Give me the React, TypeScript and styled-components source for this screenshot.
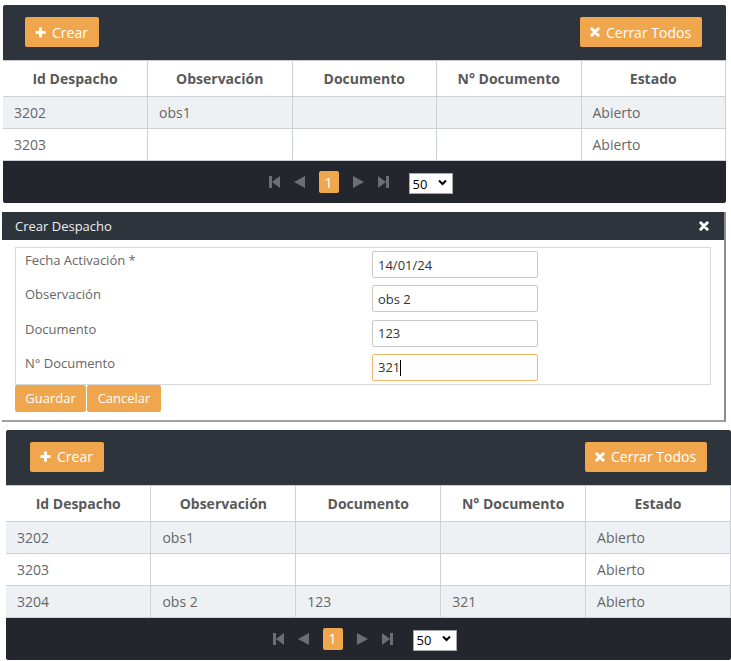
import React from "react";
import styled, { createGlobalStyle } from "styled-components";

const Global = createGlobalStyle`
  html, body { margin: 0; padding: 0; background: #ffffff; }
  body { font-family: "Open Sans", "Noto Sans", sans-serif; }
  * { box-sizing: border-box; }
`;

const ORANGE = "#f0a64c";

const Page = styled.div`
  display: flex;
  flex-direction: column;
  width: 731px;
  height: 661px;
  overflow: hidden;
`;

const Panel = styled.section<{ $left: number; $top: number; $width: number }>`
  margin-left: ${(p) => p.$left}px;
  margin-top: ${(p) => p.$top}px;
  width: ${(p) => p.$width}px;
  flex-shrink: 0;
  display: flex;
  flex-direction: column;
  border-radius: 3px;
  overflow: hidden;
  background: #23272d;
`;

const Toolbar = styled.div<{ $padLeft: number }>`
  height: 55px;
  background: #2e343b;
  display: flex;
  align-items: center;
  justify-content: space-between;
  padding: 0 24px 0 ${(p) => p.$padLeft}px;
`;

const ToolButton = styled.button<{ $width: number }>`
  width: ${(p) => p.$width}px;
  height: 30px;
  margin-top: -1px;
  border: none;
  border-radius: 2px;
  background: ${ORANGE};
  color: #ffffff;
  font-family: "Open Sans", sans-serif;
  font-size: 14px;
  display: flex;
  align-items: center;
  gap: 6px;
  padding: 0 0 0 10px;
  cursor: pointer;
`;

const Table = styled.table`
  width: 100%;
  table-layout: fixed;
  border-collapse: collapse;
  background: #ffffff;
`;

const HeadCell = styled.th`
  height: 36px;
  padding: 0 8px;
  text-align: center;
  font-size: 14px;
  font-weight: 700;
  color: #595959;
  border: 1px solid #cdd1d5;
  border-top-color: #c8ccd0;
  &:first-child { border-left: none; }
`;

const Row = styled.tr<{ $striped: boolean }>`
  background: ${(p) => (p.$striped ? "#eef1f4" : "#ffffff")};
`;

const Cell = styled.td`
  height: 32px;
  padding: 0 11px;
  font-size: 14px;
  color: #666666;
  border: 1px solid #cdd1d5;
  white-space: nowrap;
  &:first-child { border-left: none; }
`;

const Footer = styled.div`
  height: 42px;
  background: #23272d;
  display: flex;
  align-items: center;
  justify-content: center;
  gap: 14px;
  padding-right: 8px;
`;

const PagerIcon = styled.svg`
  width: 11px;
  height: 12px;
  fill: #6a6f76;
`;

const PageBox = styled.span`
  width: 20px;
  height: 22px;
  border-radius: 2px;
  background: ${ORANGE};
  color: #ffffff;
  font-size: 14px;
  display: flex;
  align-items: center;
  justify-content: center;
`;

const SelectWrap = styled.div`
  position: relative;
  margin-left: 6px;
  width: 44px;
  height: 21px;
`;

const Select = styled.select`
  appearance: none;
  width: 100%;
  height: 100%;
  border: 1px solid #a9a9a9;
  background: #ffffff;
  color: #000000;
  font-family: "Open Sans", sans-serif;
  font-size: 13px;
  padding: 0 0 0 3px;
  border-radius: 0;
`;

const Chevron = styled.svg`
  position: absolute;
  right: 6px;
  top: 7px;
  width: 9px;
  height: 7px;
  pointer-events: none;
`;

const Dialog = styled.section`
  margin-left: 2px;
  margin-top: 9px;
  width: 724px;
  flex-shrink: 0;
  display: flex;
  flex-direction: column;
  background: #ffffff;
  border-right: 2px solid #8d8d8d;
  border-bottom: 2px solid #a0a0a0;
`;

const DialogHeader = styled.div`
  height: 28px;
  background: #2e343b;
  display: flex;
  align-items: center;
  justify-content: space-between;
  padding: 0 15px 0 13px;
  color: #eceff1;
  font-size: 13px;
`;

const DialogBody = styled.div`
  display: flex;
  flex-direction: column;
  align-items: flex-start;
  padding: 7px 13px 8px 13px;
`;

const FormBox = styled.div`
  width: 100%;
  border: 1px solid #d6d9dc;
  padding: 3px 0 3px 9px;
  display: grid;
  grid-template-columns: 347px 166px;
  row-gap: 7.3px;
`;

const Label = styled.label`
  font-size: 13px;
  line-height: 18px;
  color: #666666;
  align-self: start;
`;

const InputWrap = styled.div`
  position: relative;
`;

const Input = styled.input<{ $focused?: boolean }>`
  width: 166px;
  height: 27px;
  border: 1px solid ${(p) => (p.$focused ? "#f2b66c" : "#c9c9c9")};
  border-radius: 2px;
  padding: 0 5px;
  font-family: "Open Sans", sans-serif;
  font-size: 13px;
  color: #333333;
  outline: none;
  background: #ffffff;
`;

const Caret = styled.span`
  position: absolute;
  left: 28px;
  top: 6px;
  width: 1px;
  height: 16px;
  background: #000000;
`;

const Actions = styled.div`
  display: flex;
  gap: 1px;
`;

const ActionButton = styled.button<{ $width: number }>`
  width: ${(p) => p.$width}px;
  height: 27px;
  border: none;
  border-radius: 2px;
  background: ${ORANGE};
  color: #ffffff;
  font-family: "Open Sans", sans-serif;
  font-size: 13px;
  padding: 0;
  cursor: pointer;
`;

const PlusIcon = () => (
  <svg width="11" height="11" viewBox="0 0 11 11">
    <path d="M5.5 0.5v10M0.5 5.5h10" stroke="#fff" strokeWidth="3" />
  </svg>
);

const XIcon = ({ size = 10 }: { size?: number }) => (
  <svg width={size} height={size} viewBox="0 0 10 10">
    <path d="M1.8 1.8l6.4 6.4M8.2 1.8l-6.4 6.4" stroke="#fff" strokeWidth="3" strokeLinecap="round" />
  </svg>
);

type RowData = { id: string; obs: string; doc: string; ndoc: string; estado: string };

const Grid = ({
  rows,
  left,
  top,
  width,
  padLeft,
}: {
  rows: RowData[];
  left: number;
  top: number;
  width: number;
  padLeft: number;
}) => (
  <Panel $left={left} $top={top} $width={width}>
    <Toolbar $padLeft={padLeft}>
      <ToolButton $width={74}>
        <PlusIcon />
        Crear
      </ToolButton>
      <ToolButton $width={122}>
        <XIcon />
        Cerrar Todos
      </ToolButton>
    </Toolbar>
    <Table>
      <thead>
        <tr>
          <HeadCell>Id Despacho</HeadCell>
          <HeadCell>Observación</HeadCell>
          <HeadCell>Documento</HeadCell>
          <HeadCell>N° Documento</HeadCell>
          <HeadCell>Estado</HeadCell>
        </tr>
      </thead>
      <tbody>
        {rows.map((r, i) => (
          <Row key={r.id} $striped={i % 2 === 0}>
            <Cell>{r.id}</Cell>
            <Cell>{r.obs}</Cell>
            <Cell>{r.doc}</Cell>
            <Cell>{r.ndoc}</Cell>
            <Cell>{r.estado}</Cell>
          </Row>
        ))}
      </tbody>
    </Table>
    <Footer>
      <PagerIcon viewBox="0 0 11 12">
        <rect x="0" y="0" width="3" height="12" />
        <path d="M11 0v12L3 6z" />
      </PagerIcon>
      <PagerIcon viewBox="0 0 11 12">
        <path d="M11 0v12L0 6z" />
      </PagerIcon>
      <PageBox>1</PageBox>
      <PagerIcon viewBox="0 0 11 12">
        <path d="M0 0v12l11-6z" />
      </PagerIcon>
      <PagerIcon viewBox="0 0 11 12">
        <path d="M0 0v12l8-6z" />
        <rect x="8" y="0" width="3" height="12" />
      </PagerIcon>
      <SelectWrap>
        <Select defaultValue="50">
          <option value="10">10</option>
          <option value="20">20</option>
          <option value="50">50</option>
        </Select>
        <Chevron viewBox="0 0 9 7">
          <path d="M1 1.5l3.5 3.5L8 1.5" stroke="#000" strokeWidth="2" fill="none" />
        </Chevron>
      </SelectWrap>
    </Footer>
  </Panel>
);

const rows1: RowData[] = [
  { id: "3202", obs: "obs1", doc: "", ndoc: "", estado: "Abierto" },
  { id: "3203", obs: "", doc: "", ndoc: "", estado: "Abierto" },
];

const rows2: RowData[] = [
  ...rows1,
  { id: "3204", obs: "obs 2", doc: "123", ndoc: "321", estado: "Abierto" },
];

export default function App() {
  return (
    <Page>
      <Global />
      <Grid rows={rows1} left={3} top={5} width={723} padLeft={22} />
      <Dialog>
        <DialogHeader>
          <span>Crear Despacho</span>
          <XIcon size={10} />
        </DialogHeader>
        <DialogBody>
          <FormBox>
            <Label>Fecha Activación *</Label>
            <Input defaultValue="14/01/24" />
            <Label>Observación</Label>
            <Input defaultValue="obs 2" />
            <Label>Documento</Label>
            <Input defaultValue="123" />
            <Label>N° Documento</Label>
            <InputWrap>
              <Input $focused defaultValue="321" />
              <Caret />
            </InputWrap>
          </FormBox>
          <Actions>
            <ActionButton $width={71}>Guardar</ActionButton>
            <ActionButton $width={74}>Cancelar</ActionButton>
          </Actions>
        </DialogBody>
      </Dialog>
      <Grid rows={rows2} left={6} top={8} width={725} padLeft={24} />
    </Page>
  );
}
